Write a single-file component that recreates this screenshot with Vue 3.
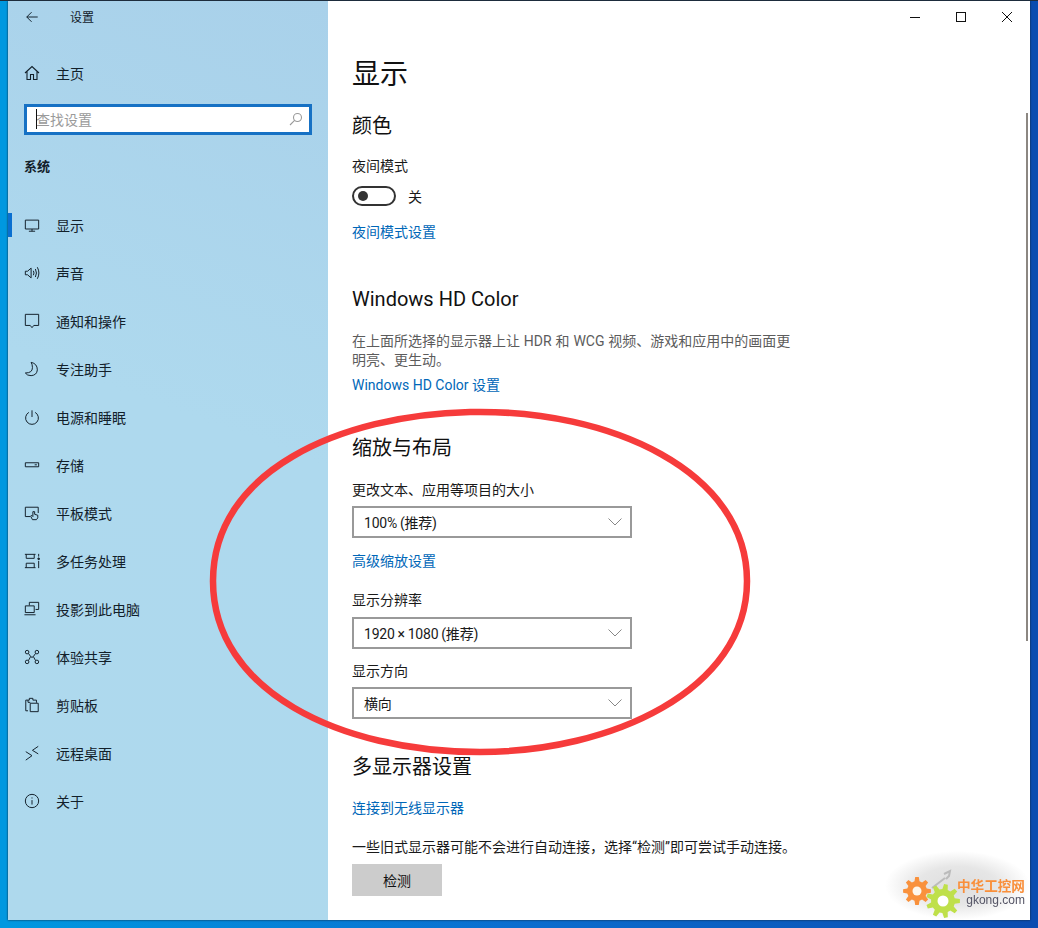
<template>
  <div class="desktop">
    <div class="window">
      <aside class="sidebar">
        <div class="titlebar">
          <svg class="back" width="14" height="14" viewBox="0 0 16 16"><path d="M14.5 8H2M7.5 2.5 2 8l5.5 5.5" /></svg>
          <span class="app-title">设置</span>
        </div>
        <div class="home">
          <svg class="icon" width="16" height="16" viewBox="0 0 16 16"><path d="M1 8 8 1.5 15 8M3 6.5V14.5H6.5V9.5H9.5V14.5H13V6.5" /></svg>
          <span>主页</span>
        </div>
        <div class="search">
          <span class="caret"></span>
          <span class="placeholder">查找设置</span>
          <svg class="search-icon" width="14" height="14" viewBox="0 0 14 14"><circle cx="8.5" cy="5.5" r="4" /><path d="M5.6 8.4 1 13" /></svg>
        </div>
        <div class="group">系统</div>
        <nav class="nav">
          <div v-for="item in nav" :key="item.label" class="nav-item" :class="{ active: item.active }">
            <svg class="icon" width="16" height="16" viewBox="0 0 18 18" v-html="item.icon"></svg>
            <span>{{ item.label }}</span>
          </div>
        </nav>
      </aside>

      <main class="content">
        <div class="controls">
          <svg width="12" height="12" viewBox="0 0 12 12"><path d="M1 6.5H11" /></svg>
          <svg width="12" height="12" viewBox="0 0 12 12"><rect x="1.5" y="1.5" width="9" height="9" /></svg>
          <svg width="12" height="12" viewBox="0 0 12 12"><path d="M1 1 11 11M11 1 1 11" /></svg>
        </div>
        <div class="scrollbar"></div>

        <h1>显示</h1>
        <h2 class="h-color">颜色</h2>
        <div class="label night">夜间模式</div>
        <div class="toggle-row">
          <span class="toggle"><span class="knob"></span></span>
          <span>关</span>
        </div>
        <a class="link night-link">夜间模式设置</a>

        <h2 class="h-hd">Windows HD Color</h2>
        <p class="desc">在上面所选择的显示器上让 HDR 和 WCG 视频、游戏和应用中的画面更明亮、更生动。</p>
        <a class="link hd-link">Windows HD Color 设置</a>

        <h2 class="h-scale">缩放与布局</h2>
        <div class="label size-label">更改文本、应用等项目的大小</div>
        <div class="select s1">
          <span>100% (推荐)</span>
          <svg class="chev" width="14" height="8" viewBox="0 0 14 8"><path d="M.5.5 7 7 13.5.5" /></svg>
        </div>
        <a class="link adv-link">高级缩放设置</a>
        <div class="label res-label">显示分辨率</div>
        <div class="select s2">
          <span>1920 × 1080 (推荐)</span>
          <svg class="chev" width="14" height="8" viewBox="0 0 14 8"><path d="M.5.5 7 7 13.5.5" /></svg>
        </div>
        <div class="label dir-label">显示方向</div>
        <div class="select s3">
          <span>横向</span>
          <svg class="chev" width="14" height="8" viewBox="0 0 14 8"><path d="M.5.5 7 7 13.5.5" /></svg>
        </div>

        <h2 class="h-multi">多显示器设置</h2>
        <a class="link wireless">连接到无线显示器</a>
        <p class="note">一些旧式显示器可能不会进行自动连接，选择“检测”即可尝试手动连接。</p>
        <button class="detect">检测</button>
      </main>
    </div>

    <svg class="circle" width="1038" height="928" viewBox="0 0 1038 928">
      <path d="M470 411C610 408 747 470 747 580C747 690 610 751 480 751C340 751 213 690 213 580C213 470 340 414 470 411Z" />
    </svg>

    <div class="watermark">
      <div class="wm-glow"></div>
      <svg class="gears" width="74" height="50" viewBox="0 0 74 50">
        <path class="wrench" d="M33 19 46 9M45 5l6-3-1 5-3 3" />
        <g class="gear-orange">
          <path :d="gearPath(18, 22, 14, 10, 8)" />
          <circle cx="18" cy="22" r="4.5" />
        </g>
        <g class="gear-green">
          <path :d="gearPath(44, 32, 17, 12, 9)" />
          <circle cx="44" cy="32" r="5.5" />
        </g>
      </svg>
      <div class="wm-text">
        <div class="wm-cn">中华工控网</div>
        <div class="wm-en">gkong.com</div>
      </div>
    </div>
  </div>
</template>

<script setup>
const stroke = (d) => `<path d="${d}" />`

const nav = [
  { label: '显示', active: true, icon: stroke('M1.5 3.5H16.5V13.5H1.5ZM9 13.5V16M5.5 16H12.5') },
  { label: '声音', icon: stroke('M1.5 7V11H4L8 14.5V3.5L4 7ZM10.5 6.5Q12 9 10.5 11.5M12.8 4.5Q15.2 9 12.8 13.5M15 2.5Q18.5 9 15 15.5') },
  { label: '通知和操作', icon: stroke('M1.5 1.5H16.5V14H11L9 16.5 7 14H1.5Z') },
  { label: '专注助手', icon: stroke('M8 1.5Q15 3 15 10Q14.5 16 8 16.5Q3.5 16.5 1.5 13.5Q9.5 13.5 9.5 7.5Q9.5 4 8 1.5Z') },
  { label: '电源和睡眠', icon: stroke('M9 1.5V9M5.5 3.8A7.2 7.2 0 1 0 12.5 3.8') },
  { label: '存储', icon: stroke('M1.5 6.5H16.5V11H1.5ZM12 8.8H14.5') },
  { label: '平板模式', icon: stroke('M7 13H1.5V2.5H16V9M9.5 16.5 7.5 12.5 8.5 11.5 10 13V7.5H12V10.5L15.5 11.5V14.5L14 16.5Z') },
  { label: '多任务处理', icon: stroke('M1 1.5H13M1 16.5H13M2.5 1.5V6H11.5V1.5M2.5 16.5V11.5H11.5V16.5M16.5 1V4M16.5 9V17') + '<circle cx="16.5" cy="6.5" r="1" class="dot" />' },
  { label: '投影到此电脑', icon: stroke('M6 5V1.5H16.5V9.5H13M1.5 5.5H11.5V13H1.5ZM0.5 15.5H13') },
  { label: '体验共享', icon: '<circle cx="3.5" cy="3.5" r="2" /><circle cx="14.5" cy="3.5" r="2" /><circle cx="3.5" cy="14.5" r="2" /><circle cx="14.5" cy="14.5" r="2" />' + stroke('M5 5 7.5 8.5 5 13M13 5 10.5 8.5 13 13M7.5 8.5 9 9.5 10.5 8.5') },
  { label: '剪贴板', icon: stroke('M4.5 15.5H2V3.5H6V1.5H10V3.5H14V6.5M7 7H16V16.5H7ZM4.5 3.5V6H7') },
  { label: '远程桌面', icon: stroke('M2 7.5 9 12 2 17M16 1.5 9.5 6 16 10') },
  { label: '关于', icon: '<circle cx="9" cy="9" r="7.5" />' + stroke('M9 8V13M9 5V6.2') }
]

function gearPath(cx, cy, outer, inner, teeth) {
  const step = (Math.PI * 2) / teeth
  const pts = []
  for (let i = 0; i < teeth; i++) {
    const a = i * step
    const list = [
      [inner, a - step * 0.32],
      [outer, a - step * 0.16],
      [outer, a + step * 0.16],
      [inner, a + step * 0.32]
    ]
    for (const [r, t] of list) {
      pts.push(`${(cx + r * Math.cos(t)).toFixed(1)} ${(cy + r * Math.sin(t)).toFixed(1)}`)
    }
  }
  return 'M' + pts.join('L') + 'Z'
}
</script>

<style>
html, body { margin: 0; background: #0a63c4; }
</style>

<style scoped>
.desktop {
  position: relative;
  width: 1038px;
  height: 928px;
  box-sizing: border-box;
  padding: 0 8px 8px;
  border-top: 1px solid #1d2c3c;
  overflow: hidden;
  background: linear-gradient(90deg, #0098e0 0, #0098e0 8px, #0a6fd0 500px, #0a4cb0 1030px);
  font-family: Roboto, "Noto Sans CJK SC", sans-serif;
  font-size: 14px;
  color: #1a1a1a;
}
.window {
  display: flex;
  height: 919px;
  box-shadow: 0 0 2px #123;
}
.sidebar {
  width: 320px;
  flex: none;
  display: flex;
  flex-direction: column;
  background: linear-gradient(200deg, #a9d1ea 0, #aed9ee 45%, #aed9ed 100%);
  color: #12202a;
}
.sidebar svg :deep(path),
.sidebar svg :deep(circle),
.sidebar svg path,
.sidebar svg circle {
  fill: none;
  stroke: #12202a;
  stroke-width: 1.1;
}
.sidebar svg :deep(.dot) { fill: #12202a; }
.titlebar {
  height: 32px;
  display: flex;
  align-items: center;
  padding-left: 17px;
}
.app-title {
  margin-left: 31px;
  margin-bottom: 2px;
  font-size: 12px;
}
.home {
  height: 48px;
  margin-top: 16px;
  display: flex;
  align-items: center;
  gap: 16px;
  padding-left: 16px;
}
.search {
  position: relative;
  height: 25px;
  margin: 7px 16px 0;
  border: 3px solid #1671c4;
  padding-left: 9px;
  display: flex;
  align-items: center;
  background: #fff;
}
.caret {
  position: absolute;
  left: 9px;
  top: 2px;
  width: 1px;
  height: 20px;
  background: #111;
}
.placeholder {
  color: #9a9a9a;
  margin-bottom: 2px;
}
.search-icon {
  position: absolute;
  right: 6px;
  top: 5px;
}
.sidebar .search-icon circle,
.sidebar .search-icon path { stroke: #9a9a9a; }
.group {
  margin: 22px 0 0 16px;
  height: 20px;
  line-height: 20px;
  font-weight: 700;
  font-size: 13px;
}
.nav {
  margin-top: 24px;
  display: flex;
  flex-direction: column;
}
.nav-item {
  position: relative;
  height: 48px;
  display: flex;
  align-items: center;
  gap: 16px;
  padding-left: 16px;
}
.nav-item.active::before {
  content: "";
  position: absolute;
  left: 0;
  top: 12px;
  width: 4px;
  height: 24px;
  background: #0a6fd0;
}
.content {
  position: relative;
  flex: 1;
  background: #fff;
  padding-left: 24px;
  display: flex;
  flex-direction: column;
  align-items: flex-start;
}
.controls {
  position: absolute;
  top: 10px;
  right: 0;
  display: flex;
  gap: 34px;
  padding-right: 17px;
}
.controls svg { fill: none; stroke: #111; stroke-width: 1; }
.scrollbar {
  position: absolute;
  right: 2px;
  top: 112px;
  width: 2px;
  height: 528px;
  background: #8c8782;
}
h1, h2, p { margin: 0; font-weight: 400; }
h1 {
  margin-top: 50px;
  font-size: 28px;
  line-height: 48px;
  color: #111;
}
h2 {
  font-size: 20px;
  line-height: 28px;
  color: #111;
}
.h-color { margin-top: 13px; }
.label { line-height: 20px; }
.night { margin-top: 16px; }
.toggle-row {
  display: flex;
  align-items: center;
  gap: 12px;
  height: 22px;
  margin-top: 9px;
}
.toggle {
  box-sizing: border-box;
  width: 44px;
  height: 20px;
  border: 2px solid #333;
  border-radius: 10px;
  display: flex;
  align-items: center;
  padding-left: 4px;
}
.knob {
  width: 10px;
  height: 10px;
  border-radius: 50%;
  background: #333;
}
.link {
  color: #0067b8;
  line-height: 20px;
}
.night-link { margin-top: 15px; }
.h-hd { margin-top: 43px; }
.desc {
  width: 450px;
  margin-top: 19px;
  line-height: 19px;
  font-size: 14px;
  color: #5c5c5c;
  word-spacing: 0.4px;
}
.hd-link { margin-top: 5px; }
.h-scale { margin-top: 39px; }
.size-label { margin-top: 18px; }
.select {
  box-sizing: border-box;
  width: 280px;
  height: 32px;
  border: 2px solid #999;
  padding: 0 10px;
  display: flex;
  align-items: center;
  justify-content: space-between;
  letter-spacing: -0.2px;
  word-spacing: -0.4px;
}
.s1 { margin-top: 6px; }
.s2 { margin-top: 7px; }
.s3 { margin-top: 6px; }
.chev { fill: none; stroke: #888; stroke-width: 1; margin-right: -2px; }
.adv-link { margin-top: 13px; }
.res-label { margin-top: 19px; }
.dir-label { margin-top: 12px; }
.h-multi { margin-top: 34px; }
.wireless { margin-top: 17px; }
.note { margin-top: 19px; line-height: 20px; }
.detect {
  width: 90px;
  height: 32px;
  margin-top: 7px;
  border: 0;
  padding: 0;
  background: #ccc;
  font: inherit;
  color: #111;
}
.circle {
  position: absolute;
  left: 0;
  top: 0;
  pointer-events: none;
}
.circle path {
  fill: none;
  stroke: #f63b3b;
  stroke-width: 6.5;
}
.watermark {
  position: absolute;
  left: 899px;
  top: 868px;
  display: flex;
  align-items: center;
}
.wm-glow {
  position: absolute;
  left: -14px;
  top: -18px;
  width: 145px;
  height: 69px;
  background: radial-gradient(closest-side, #dedede 0, #e6e6e6 55%, rgba(255, 255, 255, 0) 100%);
}
.gears {
  position: relative;
  filter: blur(0.4px);
}
.gear-orange path { fill: #f9913c; }
.gear-orange circle { fill: #fdf6ec; }
.gear-green path { fill: #bfe04a; }
.gear-green circle { fill: #fff; }
.wrench { fill: none; stroke: #bbb; stroke-width: 2; }
.wm-text {
  position: relative;
  margin-left: -16px;
  margin-top: -2px;
  line-height: 14px;
  text-align: right;
  filter: blur(0.3px);
}
.wm-cn {
  font-size: 13.6px;
  font-weight: 700;
  color: #f98f3a;
}
.wm-en {
  font-size: 12px;
  color: #556;
  font-family: "Liberation Sans", sans-serif;
}
</style>
